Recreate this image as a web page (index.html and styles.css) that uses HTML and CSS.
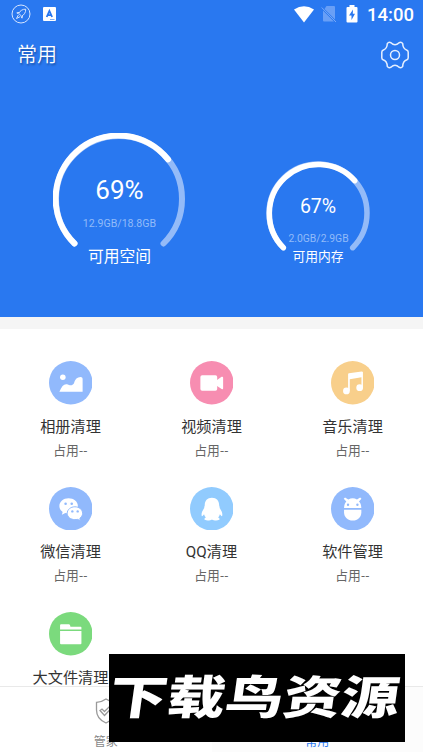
FILE: index.html
```html
<!DOCTYPE html>
<html lang="zh-CN">
<head>
<meta charset="utf-8">
<title>常用</title>
<link rel="stylesheet" href="styles.css">
</head>
<body>
<main class="screen">
  <section class="hero">
    <div class="status">
      <svg class="rocket" viewBox="0 0 20 20"><circle cx="10" cy="10" r="9"/><path d="M14.7 5.2C11.5 5 9.300 6.800 7.600 9.300L10.700 12.300C13.200 10.600 14.900 8.400 14.700 5.200ZM8.300 8.300L5.800 8.900L7.500 9.900M11.500 11.700L11 14.200L10 12.500M7.300 11L5.500 14.500L9 12.700"/></svg>
      <svg class="abox" viewBox="0 0 14 14"><rect width="13" height="14" rx="1"/><path d="M3.700 10L6.400 4L9.100 10M4.700 8.200H8.100"/><path class="thin" d="M7 12.500H11.500"/></svg>
      <span class="grow"></span>
      <svg class="wifi" viewBox="0 0 20 17"><path d="M0 3.500Q10-3 20 3.500L10 16.500Z"/></svg>
      <svg class="sim" viewBox="0 0 16 18"><path d="M5.500 1H13Q14 1 14 2V14.500L3.500 4ZM2 5.500L13 16.500H3Q2 16.500 2 15.500Z"/><path class="slash" d="M.7 2.500L15 17"/></svg>
      <svg class="battery" viewBox="0 0 12 18"><path d="M3.500 0H8.500V2H10.500Q11.500 2 11.500 3V16.500Q11.500 17.500 10.500 17.500H1.500Q.5 17.500 .5 16.500V3Q.5 2 1.500 2H3.500Z"/><path class="bolt" d="M7 4.500L3 10.500H5.500V15L9 8.800H6.800Z"/></svg>
      <span class="clock">14:00</span>
    </div>
    <header class="header">
      <h1>常用</h1>
      <svg class="gear" viewBox="-15 -15 30 30"><path d="M-7.700-11.400Q-6.400-13.300-4.100-12.300C-1.600-9.900 1.600-9.900 4.100-12.300Q6.400-13.300 7.700-11.400C7.800-7.500 9.300-5.600 12-4.700Q13.200-4.300 13.200-2.700V2.700Q13.200 4.300 12 4.700C9.300 5.600 7.800 7.500 7.700 11.400Q6.400 13.300 4.100 12.300C1.600 9.900-1.600 9.900-4.100 12.300Q-6.400 13.300-7.700 11.400C-7.800 7.500-9.300 5.600-12 4.700Q-13.200 4.300-13.200 2.700V-2.700Q-13.200-4.300-12-4.700C-9.300-5.600-7.800-7.500-7.700-11.400Z"/><circle r="4.500"/></svg>
    </header>
    <div class="gauges">
      <div class="gauge large">
        <svg class="ring" viewBox="-66 -66 132 132"><path class="track" d="M-44.500 44.500A63 63 0 1 1 44.500 44.500"/><path class="value" d="M-44.500 44.500A63 63 0 1 1 49-39.600"/></svg>
        <strong>69%</strong><small>12.9GB/18.8GB</small><span>可用空间</span>
      </div>
      <div class="gauge compact">
        <svg class="ring" viewBox="-52 -52 104 104"><path class="track" d="M-34.700 34.700A49 49 0 1 1 34.700 34.700"/><path class="value" d="M-34.700 34.700A49 49 0 1 1 36.700-32.400"/></svg>
        <strong>67%</strong><small>2.0GB/2.9GB</small><span>可用内存</span>
      </div>
    </div>
  </section>
  <section class="grid">
    <article class="item"><svg class="icon blue" viewBox="0 0 44 44"><circle cx="22" cy="22" r="22"/><g><circle cx="14" cy="16.500" r="2.800"/><path d="M10.500 31C13 25.500 15 23 18 23.500C21 24.300 23 25.800 25.300 22.500C26.500 18 28.500 16.500 32 16.200Q34 16.200 34 18V31Z"/></g></svg><h2>相册清理</h2><p>占用<span>--</span></p></article>
    <article class="item"><svg class="icon pink" viewBox="0 0 44 44"><circle cx="22" cy="22" r="22"/><g><rect x="10.500" y="14.500" width="17" height="15.500" rx="1.800"/><path d="M27 19.500L32 16Q33.500 15.500 33.500 17V27.500Q33.500 29 32 28.300L27 25Z"/></g></svg><h2>视频清理</h2><p>占用<span>--</span></p></article>
    <article class="item"><svg class="icon orange" viewBox="0 0 44 44"><circle cx="22" cy="22" r="22"/><g><path d="M17.300 13.500Q17.300 12.700 18.200 12.500L31 10.500Q32.300 10.500 32.300 11.500V27H30.800V16.500L19 18.500V30H17.300Z"/><circle cx="15.600" cy="30.300" r="3.400"/><circle cx="29" cy="27" r="3.400"/></g></svg><h2>音乐清理</h2><p>占用<span>--</span></p></article>
    <article class="item"><svg class="icon blue" viewBox="0 0 44 44"><circle cx="22" cy="22" r="22"/><g><path d="M19.800 11.500C14.500 11.500 10.500 15 10.500 19.200C10.500 21.700 11.800 23.800 13.800 25.200L13 28L16.500 26.300Q18 26.700 19.800 26.700C25 26.700 29.200 23.500 29.200 19.200S25 11.500 19.800 11.500Z"/><path class="rim" d="M26.200 20C30.600 20 34 23 34 26.600C34 28.700 32.900 30.500 31.200 31.700L31.700 34L28.700 32.700Q27.500 33 26.200 33C21.800 33 18.400 30.200 18.400 26.600S21.800 20 26.200 20Z"/></g><g class="cut"><circle cx="16.800" cy="17" r="1.300"/><circle cx="23" cy="17" r="1.300"/><circle cx="23.600" cy="24.700" r="1.200"/><circle cx="29" cy="24.700" r="1.200"/></g></svg><h2>微信清理</h2><p>占用<span>--</span></p></article>
    <article class="item"><svg class="icon sky" viewBox="0 0 44 44"><circle cx="22" cy="22" r="22"/><path d="M22.200 10.800C17.400 10.800 14.800 14 14.900 18.800Q14.400 20 14.300 21.500C12 24.500 11.200 27.500 12 29.500Q12.500 29.800 14.200 27.600Q14.700 29.500 16 30.800Q13.700 32 15 33.200C17 34.300 20.500 34 22.200 32.800C24 34 27.500 34.300 29.500 33.200Q30.800 32 28.500 30.800Q29.800 29.500 30.200 27.600Q32 29.800 32.400 29.500C33.200 27.500 32.400 24.500 30.100 21.500Q30 20 29.500 18.800C29.600 14 27 10.800 22.200 10.800Z"/></svg><h2>QQ清理</h2><p>占用<span>--</span></p></article>
    <article class="item"><svg class="icon blue" viewBox="0 0 44 44"><circle cx="22" cy="22" r="22"/><g><path d="M13.200 21.300C13.300 17.800 14.500 15.500 15.500 14.600L12.900 11.800L14.200 10.700L17.500 12.700Q22 10.200 26.300 12.700L29.500 10.700L30.800 11.800L28.300 14.600C29.500 15.500 30.600 17.800 30.700 21.300Z"/><path d="M13.200 23H30.700V25.500C30.700 30.500 27 34 22 34S13.200 30.500 13.200 25.500Z"/></g><g class="cut"><circle cx="17.200" cy="18" r="1.200"/><circle cx="26.700" cy="18" r="1.200"/></g></svg><h2>软件管理</h2><p>占用<span>--</span></p></article>
    <article class="item"><svg class="icon green" viewBox="0 0 44 44"><circle cx="22" cy="22" r="22"/><g><path d="M11.200 17.800V13.500Q11.200 12.500 12.200 12.500H20Q21 12.500 21.300 13.500L21.700 14.800H32Q32.800 14.800 32.800 15.600V17.800Z"/><path d="M11.200 19.300H32.800V31.500Q32.800 32.500 31.800 32.500H12.200Q11.200 32.500 11.200 31.500Z"/></g></svg><h2>大文件清理</h2></article>
  </section>
  <nav class="tabs">
    <div class="tab"><svg viewBox="0 0 22 26"><path d="M11 1Q7 4 1.500 4.300V12C1.500 18 5 22.500 11 25C17 22.500 20.500 18 20.500 12V4.300Q15 4 11 1Z"/><path d="M5 12.500L9.500 17.500L17.500 9L15.500 7.500L9.500 13.500L7 11Z"/></svg><span>管家</span></div>
    <div class="tab active"><svg viewBox="0 0 22 26"><rect x="2" y="4" width="18" height="18" rx="3"/></svg><span>常用</span></div>
  </nav>
  <div class="watermark"><span>下载鸟资源</span></div>
</main>
</body>
</html>
```
FILE: styles.css
```css
* { box-sizing: border-box; }
body {
  margin: 0;
  font-family: Roboto, "Noto Sans CJK SC", sans-serif;
  color: #333;
  overflow: hidden;
}
h1, h2, p { margin: 0; font-weight: 400; }
svg { display: block; flex: none; }
.screen {
  position: relative;
  width: 423px;
  height: 752px;
  overflow: hidden;
  display: flex;
  flex-direction: column;
  background: #fff;
}
.hero { height: 317px; flex: none; background: #2978f0; color: #fff; }
.status { height: 28px; display: flex; align-items: center; padding: 0 9px 0 11px; }
.rocket { width: 20px; height: 20px; fill: none; stroke: #d6e5ff; stroke-width: 1; }
.abox { width: 14px; height: 14px; margin-left: 12px; fill: #fff; }
.abox path { fill: none; stroke: #2978f0; stroke-width: 1.8; }
.abox .thin { stroke-width: .6; }
.grow { flex: 1; }
.wifi { width: 20px; height: 17px; fill: #fff; }
.sim { width: 16px; height: 18px; margin-left: 7px; fill: #699ff6; }
.slash { stroke: #78a9f7; stroke-width: 1; }
.battery { width: 12px; height: 18px; margin-left: 9px; margin-right: 1px; fill: #fff; }
.bolt { fill: #2978f0; }
.clock { margin-left: 8px; font-size: 18.5px; line-height: 28px; padding-top: 2px; font-weight: 500; width: 47px; white-space: nowrap; }
.header { height: 53px; display: flex; align-items: center; justify-content: space-between; padding: 0 13px 0 17px; }
.header h1 { font-size: 20px; line-height: 30px; font-weight: 350; margin-top: 1px; text-shadow: 1px 2px 2px rgba(0, 0, 0, .3); }
.gear { width: 30px; height: 30px; fill: none; stroke: #e5efff; stroke-width: 1.5; }
.gauges { display: flex; align-items: flex-start; padding: 52px 0 0 53px; }
.gauge { display: grid; justify-items: center; flex: none; }
.gauge > * { grid-column: 1; grid-row: 1; line-height: 20px; white-space: nowrap; }
.gauge strong, .gauge small { font-weight: 400; }
.gauge small { font-size: 10.6px; color: #92bbf9; }
.ring { fill: none; stroke-linecap: round; }
.track { stroke: #94bbf8; }
.value { stroke: #fff; }
.large { width: 132px; }
.large .ring { width: 132px; height: 132px; stroke-width: 6; }
.large strong { font-size: 26px; margin: 47px 0 0 1px; }
.large small { margin: 81px 0 0 1px; }
.large span { font-size: 15.8px; margin: 114px 0 0 1px; }
.compact { width: 104px; margin: 28px 0 0 81px; }
.compact .ring { width: 104px; height: 104px; stroke-width: 5.5; }
.compact strong { font-size: 19.5px; margin-top: 36px; }
.compact small { font-size: 10.4px; margin: 68px 0 0 1px; }
.compact span { font-size: 12.8px; margin-top: 86px; }
.grid {
  flex: 1;
  min-height: 0;
  overflow: hidden;
  border-top: 12px solid #f5f5f5;
  padding-top: 32px;
  display: grid;
  grid-template-columns: repeat(3, 141px);
  grid-auto-rows: 125.700px;
}
.item { display: flex; flex-direction: column; align-items: center; }
.icon { width: 43.500px; height: 43.500px; fill: #fff; }
.blue { color: #91b9fc; }
.pink { color: #f78db1; }
.orange { color: #f8cf8b; }
.sky { color: #91cbfe; }
.green { color: #7bda7d; }
.icon > circle, .cut { fill: currentColor; }
.icon.sky > path { fill: #fff; }
.rim { stroke: currentColor; stroke-width: 1; }
.item h2 { font-size: 15.2px; line-height: 24px; margin-top: 10px; }
.item p { font-size: 12.8px; line-height: 20px; margin-top: 1px; color: #666; }
.item p span { font-family: "Noto Sans", sans-serif; letter-spacing: .3px; }
.tabs { height: 66px; flex: none; display: flex; border-top: 1px solid #e9e9e9; background: #fff; }
.tab { flex: 1; display: flex; flex-direction: column; align-items: center; padding-top: 11px; font-size: 12px; color: #888; }
.tab svg { width: 22px; height: 26px; fill: none; stroke: #999; stroke-width: 1.3; }
.tab span { line-height: 18px; margin-top: 9px; }
.active { background: #fcfcfc; color: #2978f0; }
.active svg { stroke: #2978f0; }
.watermark {
  position: absolute;
  left: 109px;
  top: 654px;
  width: 296px;
  height: 88px;
  display: flex;
  align-items: center;
  justify-content: center;
  background: #000;
  color: #fff;
}
.watermark span {
  font: 900 46px/88px "Noto Sans CJK SC", sans-serif;
  white-space: nowrap;
  transform: translate(-2px, -4px) skewX(-8deg) scaleX(1.26);
}
```
